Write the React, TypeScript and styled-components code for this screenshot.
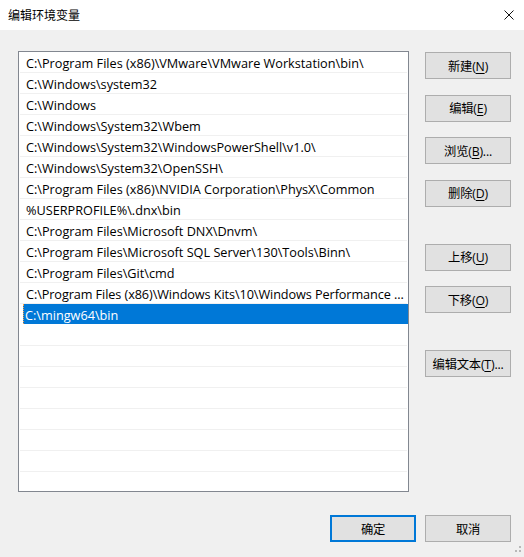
import React from "react";
import styled, { createGlobalStyle } from "styled-components";

const Global = createGlobalStyle`
  html, body { margin: 0; padding: 0; background: #f0f0f0; }
  body {
    font-family: "Open Sans", "Noto Sans CJK SC", sans-serif;
    font-size: 12px;
    color: #000;
  }
  * { box-sizing: border-box; }
`;

const Window = styled.div`
  width: 524px;
  height: 557px;
  display: flex;
  flex-direction: column;
  background: #f0f0f0;
  position: relative;
  overflow: hidden;
`;

const TitleBar = styled.div`
  height: 30px;
  background: #ffffff;
  display: flex;
  align-items: center;
  justify-content: space-between;
  padding: 0 10px 1px 8px;
`;

const Title = styled.span`
  font-family: "Noto Sans CJK SC", sans-serif;
  font-size: 12px;
`;

const Close = styled.svg`
  width: 10px;
  height: 10px;
`;

const Body = styled.div`
  display: flex;
  flex-direction: column;
  padding: 21px 13px 0 18px;
`;

const Main = styled.div`
  display: flex;
  gap: 16px;
`;

const ListBox = styled.div`
  width: 391px;
  height: 441px;
  border: 1px solid #828790;
  background: #fff;
  overflow: hidden;
  font-size: 12.7px;
`;

const Row = styled.div<{ $tight?: boolean }>`
  height: 21px;
  margin: 0 1px;
  padding-left: 6px;
  border-bottom: 1px solid #f0f0f0;
  display: flex;
  align-items: center;
  white-space: nowrap;
  overflow: hidden;
  padding-top: 1px;
  letter-spacing: ${(p) => (p.$tight ? "-0.09px" : "0")};
`;

const EditRow = styled.div`
  height: 21px;
  margin: 0 0 0 4px;
  padding: 0 0 1px 0;
  display: flex;
  align-items: stretch;
`;

const EditBox = styled.div`
  flex: 1;
  background: #0078d7;
  color: #fff;
  display: flex;
  align-items: center;
  padding: 1px 0 0 1px;
  border-left: 1px dotted #f5a04a;
`;

const Side = styled.div`
  display: flex;
  flex-direction: column;
  padding-top: 1px;
`;

const Group = styled.div<{ $gap: number }>`
  display: flex;
  flex-direction: column;
  gap: 15.5px;
  margin-top: ${(p) => p.$gap}px;
`;

const Button = styled.button<{ $default?: boolean }>`
  width: 86px;
  height: 27px;
  padding: 0;
  background: #e1e1e1;
  border: ${(p) => (p.$default ? "2px solid #0078d7" : "1px solid #adadad")};
  font-family: "Open Sans", "Noto Sans CJK SC", sans-serif;
  font-size: 12.3px;
  color: #000;
  display: flex;
  align-items: center;
  justify-content: center;
  white-space: nowrap;
  letter-spacing: -0.2px;
  u { text-underline-offset: 2px; }
`;

const Footer = styled.div`
  display: flex;
  justify-content: flex-end;
  gap: 9px;
  margin-top: 23px;
`;

const Grip = styled.svg`
  position: absolute;
  right: 2px;
  bottom: 4px;
  width: 7px;
  height: 7px;
`;

const paths = [
  "C:\\Program Files (x86)\\VMware\\VMware Workstation\\bin\\",
  "C:\\Windows\\system32",
  "C:\\Windows",
  "C:\\Windows\\System32\\Wbem",
  "C:\\Windows\\System32\\WindowsPowerShell\\v1.0\\",
  "C:\\Windows\\System32\\OpenSSH\\",
  "C:\\Program Files (x86)\\NVIDIA Corporation\\PhysX\\Common",
  "%USERPROFILE%\\.dnx\\bin",
  "C:\\Program Files\\Microsoft DNX\\Dnvm\\",
  "C:\\Program Files\\Microsoft SQL Server\\130\\Tools\\Binn\\",
  "C:\\Program Files\\Git\\cmd",
];

const truncated = "C:\\Program Files (x86)\\Windows Kits\\10\\Windows Performance ...";

const Label: React.FC<{ text: string; k: string; tail?: string }> = ({ text, k, tail }) => (
  <span>
    {text}(<u>{k}</u>){tail}
  </span>
);

export default function App() {
  const empties = Array.from({ length: 9 });
  return (
    <>
      <Global />
      <Window>
        <TitleBar>
          <Title>编辑环境变量</Title>
          <Close viewBox="0 0 10 10">
            <path d="M0.5 0.5 L9.5 9.5 M9.5 0.5 L0.5 9.5" stroke="#111" strokeWidth="1" fill="none" />
          </Close>
        </TitleBar>
        <Body>
          <Main>
            <ListBox>
              {paths.map((p) => (
                <Row key={p}>{p}</Row>
              ))}
              <Row $tight>{truncated}</Row>
              <EditRow>
                <EditBox>C:\mingw64\bin</EditBox>
              </EditRow>
              {empties.map((_, i) => (
                <Row key={"e" + i} />
              ))}
            </ListBox>
            <Side>
              <Group $gap={0}>
                <Button><Label text="新建" k="N" /></Button>
                <Button><Label text="编辑" k="E" /></Button>
                <Button><Label text="浏览" k="B" tail="..." /></Button>
                <Button><Label text="删除" k="D" /></Button>
              </Group>
              <Group $gap={37}>
                <Button><Label text="上移" k="U" /></Button>
                <Button><Label text="下移" k="O" /></Button>
              </Group>
              <Group $gap={37}>
                <Button><Label text="编辑文本" k="T" tail="..." /></Button>
              </Group>
            </Side>
          </Main>
          <Footer>
            <Button $default>确定</Button>
            <Button>取消</Button>
          </Footer>
        </Body>
        <Grip viewBox="0 0 7 7">
          <rect x="4" y="0" width="2" height="2" fill="#b8b8b8" />
          <rect x="0" y="4" width="2" height="2" fill="#b8b8b8" />
          <rect x="4" y="4" width="2" height="2" fill="#b8b8b8" />
        </Grip>
      </Window>
    </>
  );
}
